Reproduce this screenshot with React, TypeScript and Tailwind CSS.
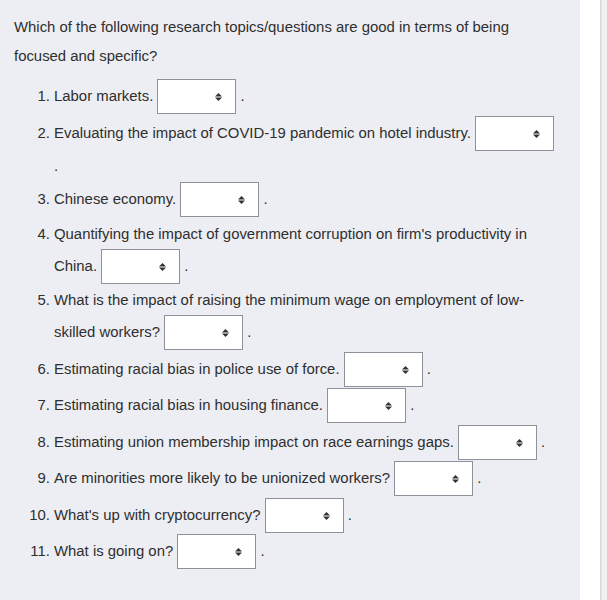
const items: string[] = [
  'Labor markets.',
  'Evaluating the impact of COVID-19 pandemic on hotel industry.',
  'Chinese economy.',
  "Quantifying the impact of government corruption on firm's productivity in China.",
  'What is the impact of raising the minimum wage on employment of low-skilled workers?',
  'Estimating racial bias in police use of force.',
  'Estimating racial bias in housing finance.',
  'Estimating union membership impact on race earnings gaps.',
  'Are minorities more likely to be unionized workers?',
  "What's up with cryptocurrency?",
  'What is going on?',
];

// Empty dropdown look-alike; baseline comes from the 33px line box inside
function FakeSelect() {
  return (
    <span className="inline-block h-[35px] w-[79px] border border-[#8d9199] bg-white pr-[13px] text-right align-baseline leading-[33px]">
      <svg width="7" height="8" viewBox="0 0 7 8" className="inline-block align-middle">
        <path d="M0 3.5 L3.5 0 L7 3.5 Z" fill="#333" />
        <path d="M0 4.5 L7 4.5 L3.5 8 Z" fill="#333" />
      </svg>
    </span>
  );
}

export default function App() {
  return (
    <div
      className="flex h-[600px] w-full text-[14.9px] text-[#2f2f2f]"
      style={{ fontFamily: '"Liberation Sans", Arial, sans-serif' }}
    >
      {/* Question panel */}
      <div className="w-[580px] shrink-0 bg-[#edeef3] pl-[14px] pr-[22px] pt-[13px]">
        <p className="mb-[8.6px] leading-[28.7px]">
          Which of the following research topics/questions are good in terms of being focused and
          specific?
        </p>
        <ol className="list-decimal pl-10 leading-[30px]">
          {items.map((text, i) => (
            <li key={i} className="mb-[1.5px]">
              {text} <FakeSelect /> .
            </li>
          ))}
        </ol>
      </div>

      {/* Right gutter */}
      <div className="w-5 shrink-0 bg-white" />
      <div className="w-px shrink-0 bg-[#d9d9d9]" />
      <div className="w-px shrink-0 bg-[#e6e6e6]" />
      <div className="flex-1 bg-[#f1f1f1]" />
    </div>
  );
}
